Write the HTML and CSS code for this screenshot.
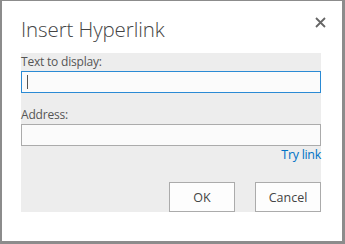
FILE: index.html
```html
<!DOCTYPE html>
<html lang="en">
	<head>
		<meta charset="UTF-8" />
		<meta name="viewport" content="width=device-width, initial-scale=1.0" />
		<title>Insert Hyperlink</title>
		<link rel="stylesheet" href="styles.css">
	</head>

	<body>
		<div class="dialog">
			<div class="dialog-header">
				<div class="dialog-title">Insert Hyperlink</div>
				<div class="dialog-close">
					<svg width="11" height="11" viewBox="0 0 11 11">
						<path d="M1 1 L10 10 M10 1 L1 10" stroke="#666" stroke-width="1.8" fill="none" />
					</svg>
				</div>
			</div>
			<div class="dialog-body">
				<div class="field-label">Text to display:</div>
				<div class="field focused"><span class="caret"></span></div>
				<div class="field-label second">Address:</div>
				<div class="field"></div>
				<div class="try-row"><a class="try-link">Try link</a></div>
				<div class="actions">
					<div class="btn">OK</div>
					<div class="btn">Cancel</div>
				</div>
			</div>
		</div>
	</body>
</html>
```

FILE: styles.css
```css
html,
body {
	margin: 0;
	padding: 0;
	background: #fff;
}

.dialog {
	box-sizing: border-box;
	width: 345px;
	height: 244px;
	border-style: solid;
	border-color: #8c8c8c;
	border-width: 1px 3px 3px 2px;
	padding: 0 21px 0 19px;
	font-family: "Open Sans", "Noto Sans", sans-serif;
	color: #444;
}

.dialog-header {
	display: flex;
	justify-content: space-between;
	align-items: flex-start;
	height: 52px;
}

.dialog-title {
	font-size: 20.5px;
	font-weight: 300;
	color: #444;
	margin-top: 14px;
	letter-spacing: -0.1px;
}

.dialog-close {
	margin-top: 16px;
	margin-right: -5px;
	width: 11px;
	height: 11px;
	display: flex;
}

.dialog-body {
	background: #ededed;
	height: 159px;
	display: flex;
	flex-direction: column;
}

.field-label {
	font-size: 12px;
	line-height: 18px;
	color: #555;
	letter-spacing: -0.2px;
}
.field-label.second {
	margin-top: 13px;
}

.field {
	box-sizing: border-box;
	height: 22px;
	border: 1px solid #ababab;
	background: #fbfbfb;
	display: flex;
	align-items: center;
}
.field.focused {
	border-color: #2a8ad4;
}
.caret {
	width: 1px;
	height: 14px;
	margin-left: 5px;
	background: #555;
}

.try-row {
	display: flex;
	justify-content: flex-end;
	font-size: 12.5px;
	line-height: 17px;
}
.try-link {
	color: #0072c6;
	letter-spacing: -0.3px;
}

.actions {
	margin-top: auto;
	display: flex;
	justify-content: flex-end;
	gap: 20px;
}

.btn {
	box-sizing: border-box;
	width: 66px;
	height: 30px;
	border: 1px solid #ababab;
	background: #fdfdfd;
	font-size: 12.5px;
	color: #444;
	display: flex;
	align-items: center;
	justify-content: center;
}
```
